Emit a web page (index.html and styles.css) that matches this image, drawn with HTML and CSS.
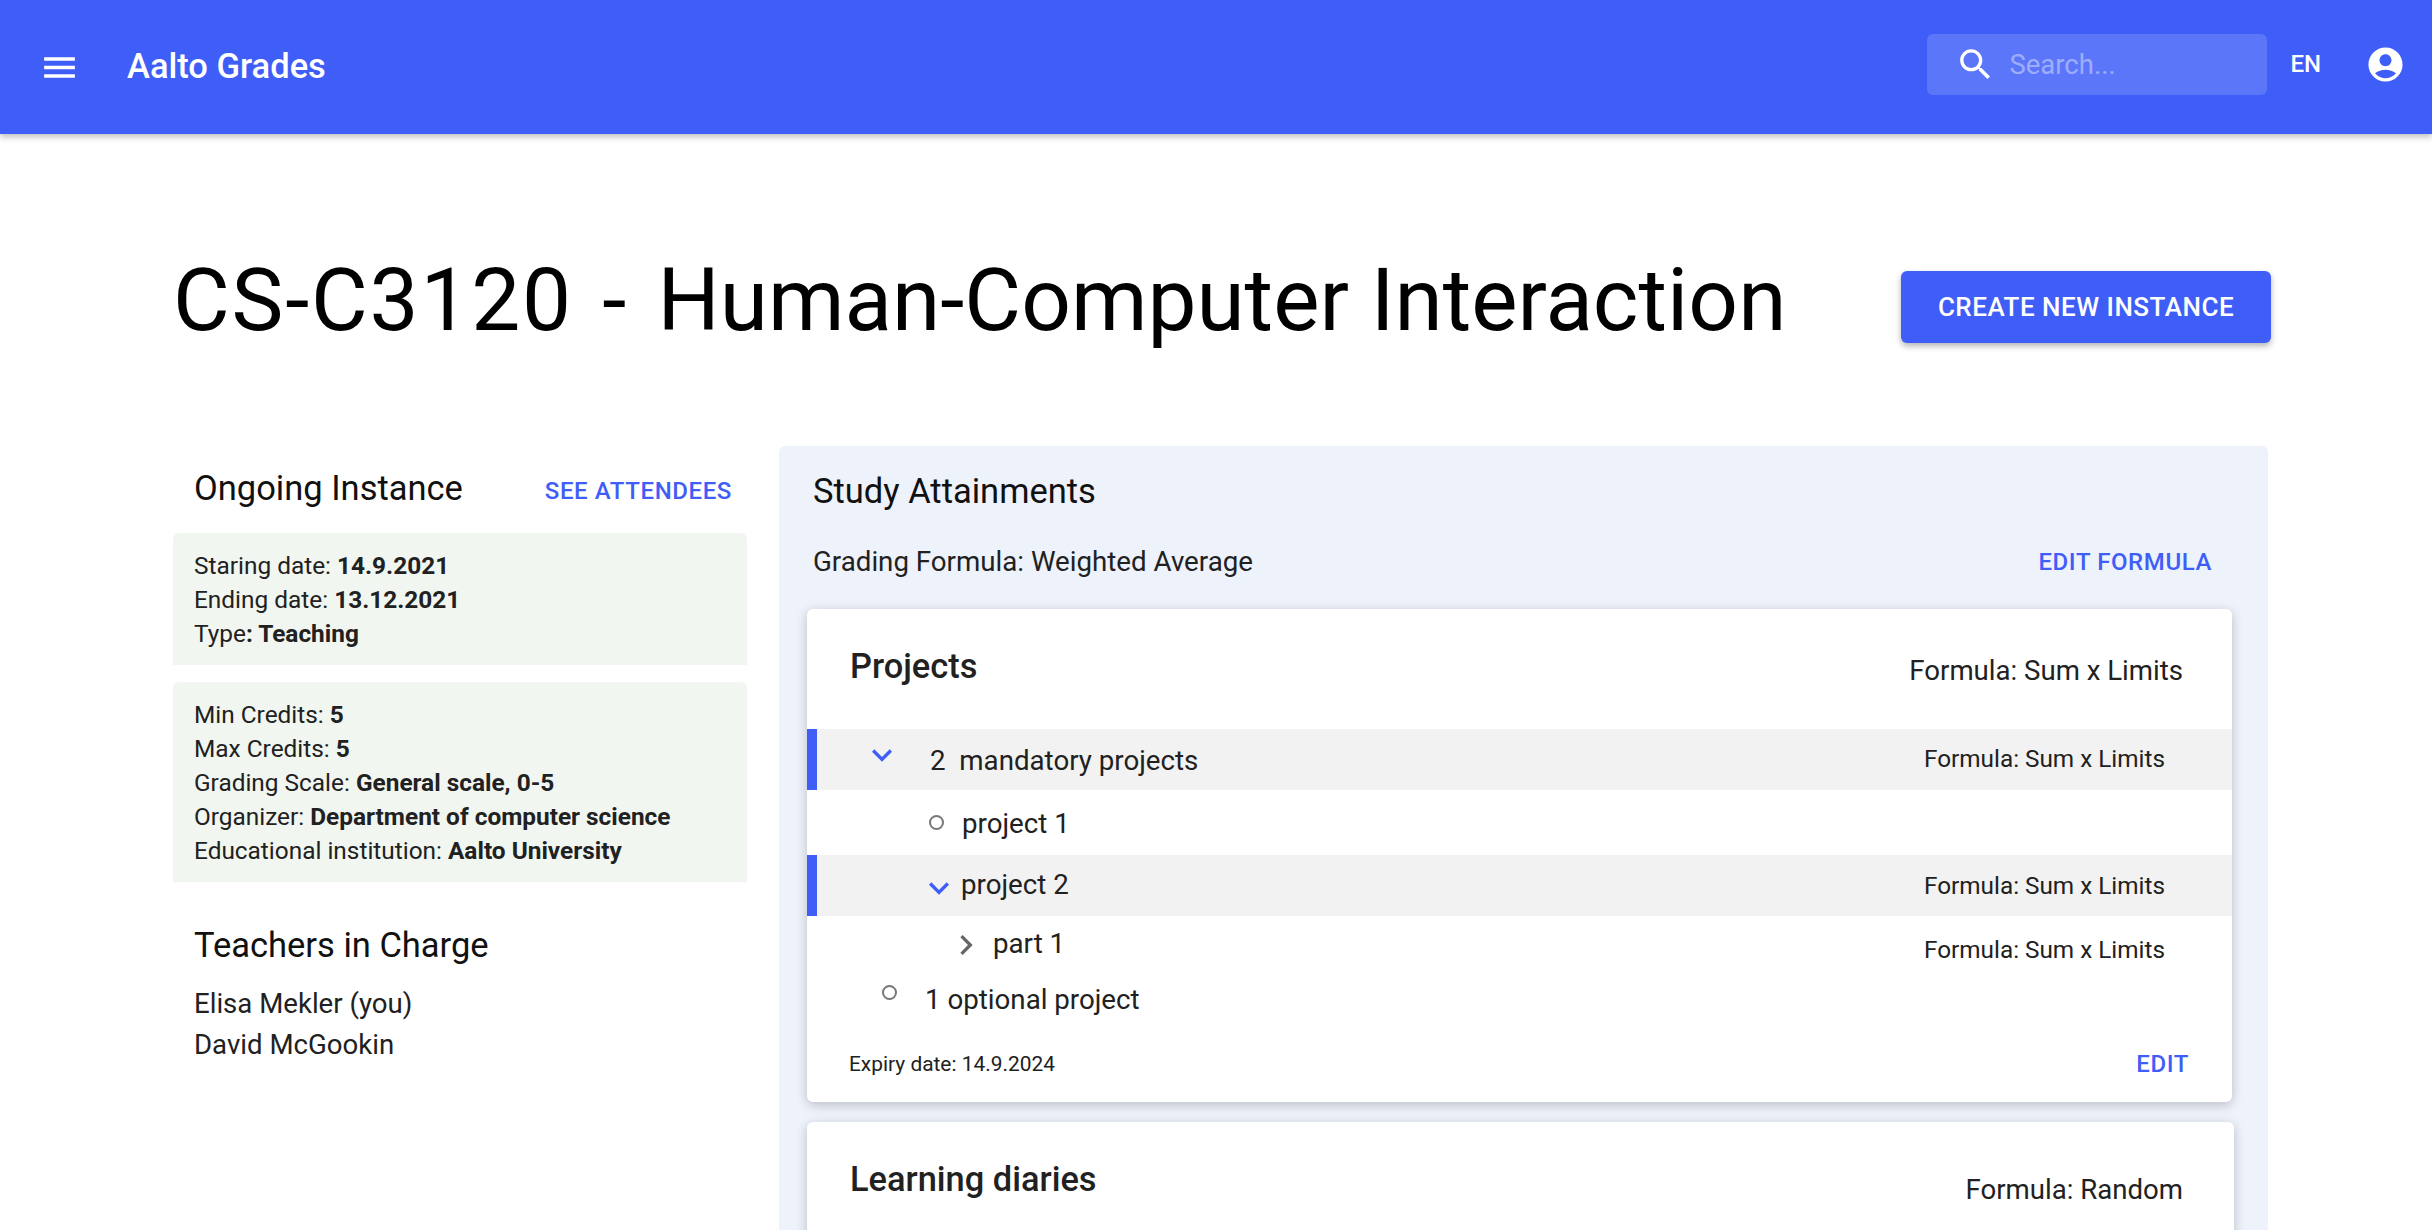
FILE: index.html

```html
<!DOCTYPE html>
<html lang="en">
<head>
  <meta charset="UTF-8" />
  <meta name="viewport" content="width=device-width, initial-scale=1.0"/>
  <title>Aalto Grades</title>
  <link rel="stylesheet" href="styles.css">
</head>
<body>
  <header class="appbar">
    <svg class="appbar-menu" viewBox="0 0 24 24"><path d="M3 18h18v-2H3v2zm0-5h18v-2H3v2zm0-7v2h18V6H3z"/></svg>
    <div class="appbar-title">Aalto Grades</div>
    <div class="search">
      <svg class="search-icon" viewBox="0 0 24 24"><path d="M15.5 14h-.79l-.28-.27C15.41 12.59 16 11.11 16 9.5 16 5.91 13.09 3 9.5 3S3 5.91 3 9.5 5.91 16 9.5 16c1.61 0 3.09-.59 4.23-1.57l.27.28v.79l5 4.99L20.49 19l-4.99-5zm-6 0C7.01 14 5 11.99 5 9.5S7.01 5 9.5 5 14 7.01 14 9.5 11.99 14 9.5 14z"/></svg>
      <span class="search-text">Search...</span>
    </div>
    <div class="lang">EN</div>
    <svg class="account" viewBox="0 0 24 24"><path d="M12 2C6.48 2 2 6.48 2 12s4.48 10 10 10 10-4.48 10-10S17.52 2 12 2zm0 4c1.93 0 3.5 1.57 3.5 3.5S13.93 13 12 13s-3.5-1.57-3.5-3.5S10.07 6 12 6zm0 14c-2.03 0-4.43-.82-6.14-2.88C7.55 15.8 9.68 15 12 15s4.45.8 6.14 2.12C16.43 19.18 14.03 20 12 20z"/></svg>
  </header>

  <main class="page">
    <div class="title-row">
      <h1><span class="course-code">CS-C3120 - </span>Human-Computer Interaction</h1>
      <button class="btn-create">CREATE NEW INSTANCE</button>
    </div>

    <div class="columns">
      <section class="left">
        <div class="left-head">
          <h2>Ongoing Instance</h2>
          <span class="link">SEE ATTENDEES</span>
        </div>
        <div class="info">
          <div>Staring date: <b>14.9.2021</b></div>
          <div>Ending date: <b>13.12.2021</b></div>
          <div>Type<b>: Teaching</b></div>
        </div>
        <div class="info">
          <div>Min Credits: <b>5</b></div>
          <div>Max Credits: <b>5</b></div>
          <div>Grading Scale: <b>General scale, 0-5</b></div>
          <div>Organizer: <b>Department of computer science</b></div>
          <div>Educational institution: <b>Aalto University</b></div>
        </div>
        <h2 class="teachers-head">Teachers in Charge</h2>
        <div class="teacher">Elisa Mekler (you)</div>
        <div class="teacher">David McGookin</div>
      </section>

      <section class="panel">
        <h2 class="panel-title">Study Attainments</h2>
        <div class="panel-sub">
          <span>Grading Formula: Weighted Average</span>
          <span class="link">EDIT FORMULA</span>
        </div>

        <div class="card">
          <div class="card-head">
            <h3>Projects</h3>
            <span class="card-formula">Formula: Sum x Limits</span>
          </div>
          <div class="row row-open row-a">
            <svg class="chev chev-blue" viewBox="0 0 24 24"><path d="M16.59 8.59 12 13.17 7.41 8.59 6 10l6 6 6-6z"/></svg>
            <span class="row-label">2&nbsp; mandatory projects</span>
            <span class="row-formula">Formula: Sum x Limits</span>
          </div>
          <div class="row row-b">
            <span class="dot"></span>
            <span class="row-label">project 1</span>
          </div>
          <div class="row row-open row-c">
            <svg class="chev chev-blue" viewBox="0 0 24 24"><path d="M16.59 8.59 12 13.17 7.41 8.59 6 10l6 6 6-6z"/></svg>
            <span class="row-label">project 2</span>
            <span class="row-formula">Formula: Sum x Limits</span>
          </div>
          <div class="row row-d">
            <svg class="chev chev-grey" viewBox="0 0 24 24"><path d="M10 6 8.59 7.41 13.17 12l-4.58 4.59L10 18l6-6z"/></svg>
            <span class="row-label">part 1</span>
            <span class="row-formula">Formula: Sum x Limits</span>
          </div>
          <div class="row row-e">
            <span class="dot"></span>
            <span class="row-label">1 optional project</span>
          </div>
          <div class="card-foot">
            <span class="expiry">Expiry date: 14.9.2024</span>
            <span class="link">EDIT</span>
          </div>
        </div>

        <div class="card card-next">
          <div class="card-head">
            <h3>Learning diaries</h3>
            <span class="card-formula">Formula: Random</span>
          </div>
        </div>
      </section>
    </div>
  </main>
</body>
</html>
```

FILE: styles.css

```css
html, body {
  height: 100%;
  overflow: hidden;
}
body {
  margin: 0;
  font-family: Roboto, "Liberation Sans", sans-serif;
  color: #212121;
  background-color: #fff;
}
h1, h2, h3 {
  margin: 0;
  font-weight: 400;
}

/* app bar */
.appbar {
  display: flex;
  align-items: center;
  height: 134px;
  padding: 0 26px 0 39px;
  background-color: #3f5ef8;
  color: #fff;
  box-shadow: 0 3px 6px rgba(0,0,0,0.25);
}
.appbar svg {
  fill: #fff;
  flex: none;
}
.appbar-menu {
  width: 41px;
  height: 41px;
}
.appbar-title {
  margin-left: 47px;
  margin-top: -3px;
  font-size: 34.5px;
  font-weight: 500;
}
.search {
  display: flex;
  align-items: center;
  width: 340px;
  height: 61px;
  margin-left: auto;
  margin-top: -5px;
  padding-left: 28px;
  box-sizing: border-box;
  background-color: rgba(255,255,255,0.15);
  border-radius: 6px;
}
.search-icon {
  width: 41px;
  height: 41px;
}
.search-text {
  margin-left: 13px;
  font-size: 27.5px;
  color: rgba(255,255,255,0.42);
}
.lang {
  margin-left: 23px;
  margin-top: -7px;
  font-size: 24px;
  font-weight: 500;
}
.account {
  width: 41px;
  height: 41px;
  margin-left: 44px;
  margin-top: -5px;
}

/* page */
.page {
  padding: 0 161px 0 173px;
}
.title-row {
  display: flex;
  align-items: center;
  justify-content: space-between;
  box-sizing: border-box;
  height: 312px;
  padding-top: 22px;
}
h1 {
  font-size: 87.3px;
  margin-bottom: 2px;
  color: #000;
}
.course-code {
  letter-spacing: 1.75px;
  word-spacing: 6px;
}
.btn-create {
  width: 370px;
  height: 72px;
  margin-top: 12px;
  border: none;
  border-radius: 6px;
  background-color: #3f5ef8;
  color: #fff;
  font-family: inherit;
  font-size: 26px;
  font-weight: 500;
  letter-spacing: 0.5px;
  box-shadow: 0 3px 6px rgba(0,0,0,0.3);
}
.link {
  color: #3f5ef8;
  font-size: 24px;
  font-weight: 500;
  letter-spacing: 0.6px;
}
.columns {
  display: flex;
  align-items: flex-start;
}

/* left column */
.left {
  width: 574px;
  flex: none;
  margin-right: 32px;
}
.left-head {
  display: flex;
  align-items: center;
  justify-content: space-between;
  height: 87px;
  padding: 0 15px 0 21px;
}
.left-head h2 {
  margin-bottom: 3px;
}
.left-head .link {
  margin-top: 3px;
}
h2 {
  font-size: 34.5px;
  color: #111;
}
.info {
  margin-bottom: 17px;
  padding: 16px 21px 14px;
  background-color: #f1f6f1;
  border-radius: 6px 6px 0 0;
  font-size: 24.4px;
  line-height: 34px;
}
.info b {
  font-weight: 700;
}
.teachers-head {
  padding: 26px 0 18px 21px;
}
.teacher {
  padding-left: 21px;
  font-size: 27.6px;
  line-height: 41px;
}

/* right panel */
.panel {
  flex: 1;
  height: 900px;
  margin-right: 3px;
  padding: 25px 36px 0 28px;
  background-color: #eef2fb;
  border-radius: 6px;
}
.panel-title {
  margin-left: 6px;
}
.panel-sub {
  display: flex;
  align-items: center;
  justify-content: space-between;
  margin: 34px 20px 0 6px;
  font-size: 27.7px;
}
.card {
  margin-top: 31px;
  background-color: #fff;
  border-radius: 6px;
  box-shadow: 0 3px 12px rgba(0,0,0,0.22);
}
.card-next {
  height: 400px;
  margin-top: 20px;
  margin-right: -2px;
}
.card-head {
  display: flex;
  align-items: center;
  justify-content: space-between;
  height: 120px;
  padding: 0 49px 0 43px;
}
.card-head h3 {
  margin-bottom: 6px;
}
h3 {
  font-size: 34.4px;
  font-weight: 500;
}
.card-formula {
  margin-top: 3px;
  font-size: 27.6px;
}
.card-next .card-formula {
  margin-top: 14px;
  margin-right: 2px;
}
.card-next h3 {
  margin-bottom: 7px;
}
.row {
  display: flex;
  align-items: center;
  padding-right: 67px;
  font-size: 27.7px;
}
.row-open {
  background-color: #f2f2f2;
  box-shadow: inset 10px 0 0 #3f5ef8;
}
.row-formula {
  margin-left: auto;
  font-size: 24.3px;
}
.chev {
  flex: none;
  width: 40px;
  height: 40px;
}
.chev-blue {
  fill: #3f5ef8;
}
.chev-grey {
  fill: #666;
}
.dot {
  flex: none;
  width: 15px;
  height: 15px;
  box-sizing: border-box;
  border: 2px solid #777;
  border-radius: 50%;
}
.row-a {
  height: 61px;
  padding-left: 55px;
}
.row-a .chev {
  margin-bottom: 10px;
}
.row-a .row-label {
  margin-left: 28px;
  margin-top: 1px;
}
.row-a .row-formula {
  margin-bottom: 2px;
}
.row-b {
  height: 65px;
  padding-left: 122px;
}
.row-b .row-label {
  margin-left: 18px;
  margin-top: 2px;
}
.row-c {
  height: 61px;
  padding-left: 112px;
}
.row-c .chev {
  margin-top: 4px;
}
.row-c .row-label {
  margin-left: 2px;
  margin-bottom: 2px;
}
.row-d {
  height: 59px;
  padding-left: 139px;
}
.row-d .row-label {
  margin-left: 7px;
  margin-bottom: 4px;
}
.row-d .chev {
  margin-bottom: 2px;
}
.row-d .row-formula {
  margin-top: 8px;
}
.row-e {
  height: 50px;
  padding-left: 75px;
}
.row-e .dot {
  margin-bottom: 16px;
}
.row-e .row-label {
  margin-left: 28px;
  margin-bottom: 2px;
}
.card-foot {
  display: flex;
  align-items: center;
  justify-content: space-between;
  height: 77px;
  padding: 0 43px 0 42px;
}
.expiry {
  font-size: 20.9px;
}
```
